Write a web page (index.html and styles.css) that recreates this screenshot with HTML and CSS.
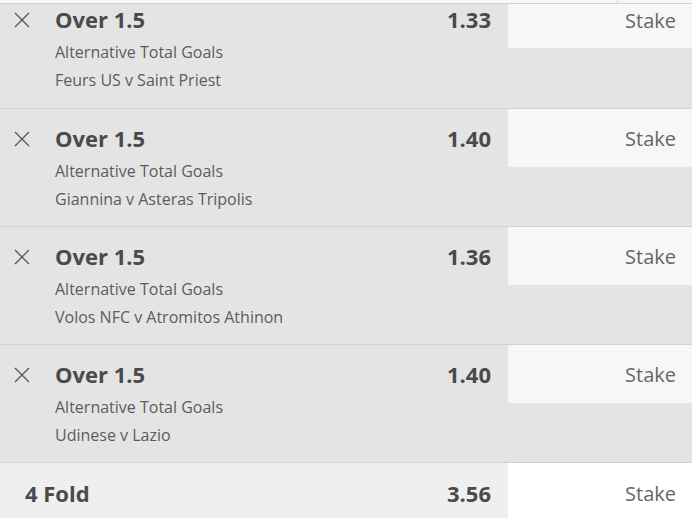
FILE: index.html
```html
<!DOCTYPE html>
<html lang="en">
<head>
  <meta charset="UTF-8">
  <meta name="viewport" content="width=device-width, initial-scale=1.0">
  <title>Bet Slip</title>
  <link rel="stylesheet" href="styles.css">
</head>
<body>
  <div class="slip">
    <div class="top-strip">
      <div class="top-cell"></div>
      <div class="top-cell last"></div>
    </div>

    <div class="bet first">
      <div class="remove">
        <svg width="16" height="16" viewBox="0 0 16 16"><path d="M1 1L15 15M15 1L1 15" stroke="#555" stroke-width="1.3" fill="none"/></svg>
      </div>
      <div class="info">
        <div class="selection">Over 1.5</div>
        <div class="market">Alternative Total Goals</div>
        <div class="market">Feurs US v Saint Priest</div>
      </div>
      <div class="odds">1.33</div>
      <div class="stake">Stake</div>
    </div>

    <div class="bet">
      <div class="remove">
        <svg width="16" height="16" viewBox="0 0 16 16"><path d="M1 1L15 15M15 1L1 15" stroke="#555" stroke-width="1.3" fill="none"/></svg>
      </div>
      <div class="info">
        <div class="selection">Over 1.5</div>
        <div class="market">Alternative Total Goals</div>
        <div class="market">Giannina v Asteras Tripolis</div>
      </div>
      <div class="odds">1.40</div>
      <div class="stake">Stake</div>
    </div>

    <div class="bet">
      <div class="remove">
        <svg width="16" height="16" viewBox="0 0 16 16"><path d="M1 1L15 15M15 1L1 15" stroke="#555" stroke-width="1.3" fill="none"/></svg>
      </div>
      <div class="info">
        <div class="selection">Over 1.5</div>
        <div class="market">Alternative Total Goals</div>
        <div class="market">Volos NFC v Atromitos Athinon</div>
      </div>
      <div class="odds">1.36</div>
      <div class="stake">Stake</div>
    </div>

    <div class="bet">
      <div class="remove">
        <svg width="16" height="16" viewBox="0 0 16 16"><path d="M1 1L15 15M15 1L1 15" stroke="#555" stroke-width="1.3" fill="none"/></svg>
      </div>
      <div class="info">
        <div class="selection">Over 1.5</div>
        <div class="market">Alternative Total Goals</div>
        <div class="market">Udinese v Lazio</div>
      </div>
      <div class="odds">1.40</div>
      <div class="stake">Stake</div>
    </div>

    <div class="fold">
      <div class="fold-name">4 Fold</div>
      <div class="odds">3.56</div>
      <div class="stake white">Stake</div>
    </div>
  </div>
</body>
</html>
```

FILE: styles.css
```css
body {
  margin: 0;
  height: 518px;
  overflow: hidden;
  font-family: "Open Sans", "Noto Sans", Arial, sans-serif;
  color: #4a4a4a;
  background-color: #f0f0f0;
}

.top-strip {
  display: flex;
  height: 3px;
  background-color: #f7f7f7;
  border-bottom: 1px solid #d4d4d4;
}

.top-cell {
  width: 617px;
  border-right: 1px solid #d4d4d4;
}

.top-cell.last {
  flex: 1;
  border-right: none;
}

.bet {
  display: flex;
  align-items: flex-start;
  height: 117px;
  background-color: #e4e4e4;
  border-bottom: 1px solid #d2d2d2;
}

.remove {
  width: 44px;
  height: 28px;
  margin-top: 16px;
  display: flex;
  justify-content: center;
  align-items: center;
}

.info {
  flex: 1;
  padding: 15px 0 0 11px;
}

.selection {
  font-size: 22px;
  font-weight: 700;
  line-height: 28px;
  margin-bottom: 5px;
}

.market {
  font-size: 16px;
  line-height: 28px;
  color: #5c5c5c;
}

.odds {
  padding: 15px 17px 0 0;
  font-size: 22px;
  font-weight: 700;
  line-height: 28px;
}

.stake {
  width: 168px;
  height: 58px;
  padding-right: 16px;
  background-color: #f7f7f7;
  text-align: right;
  font-size: 20px;
  line-height: 60px;
  color: #666;
}

.bet.first {
  height: 104px;
}

.bet.first .remove {
  margin-top: 2px;
}

.bet.first .info,
.bet.first .odds {
  padding-top: 1px;
}

.bet.first .stake {
  height: 44px;
  line-height: 34px;
}

.fold {
  display: flex;
  align-items: flex-start;
  height: 62px;
  background-color: #efefef;
}

.fold-name {
  flex: 1;
  padding: 16px 0 0 25px;
  font-size: 22px;
  font-weight: 700;
  line-height: 28px;
}

.fold .odds {
  padding-top: 16px;
}

.stake.white {
  height: 62px;
  background-color: #fff;
  line-height: 62px;
}
```
